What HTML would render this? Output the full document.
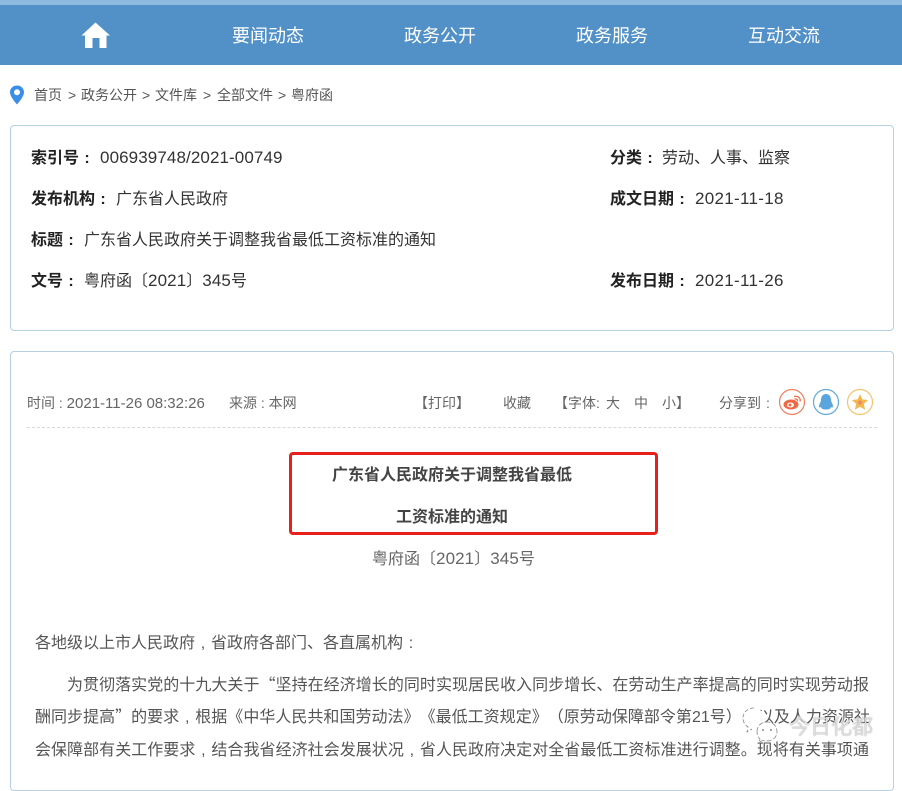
<!DOCTYPE html>
<html lang="zh-CN"><head><meta charset="utf-8"><title>广东省人民政府关于调整我省最低工资标准的通知</title>
<style>
html,body{margin:0;padding:0;background:#fff}
body{width:902px;height:767px;overflow:hidden;position:relative;font-family:"Liberation Sans","Noto Sans CJK SC",sans-serif;color:#444;text-spacing-trim:space-all}
.a{position:absolute;white-space:nowrap}
.nav{color:#fff;font-size:18px;line-height:24px;top:24px}
.cr{font-size:14px;line-height:18px;top:86px;color:#555}
.box{position:absolute;box-sizing:border-box;border:1px solid #b5d0e2;border-radius:4px;background:#fff}
.i{font-size:16px;line-height:22px;color:#333}
.i b{color:#222}
.n{font-size:17px;letter-spacing:.1px;line-height:0}
.d{letter-spacing:.3px}
.m{font-size:14px;line-height:20px;top:393px;color:#666}
.p{font-size:16px;line-height:22px;color:#555}
.j{text-align:justify;text-align-last:justify;white-space:normal}
.c{font-family:"Noto Sans CJK SC",sans-serif;line-height:0}
.q{display:inline-block;width:1em;text-align:center;text-align-last:center;line-height:0}
</style></head><body>
<div class="a" style="left:0;top:0;width:902px;height:5px;background:#8fbae0"></div>
<div class="a" style="left:0;top:5px;width:902px;height:60px;background:#5291c7"></div>
<svg class="a" style="left:81px;top:22px" width="30" height="27" viewBox="0 0 30 27"><path fill="#fff" d="M14.500 0.500 L29 13.500 L25.500 13.500 L25.500 26 L18.500 26 L18.500 16 L11.500 16 L11.500 26 L4 26 L4 13.500 L0.500 13.500 Z"/></svg>
<div class="a nav" style="left:232px">要闻动态</div>
<div class="a nav" style="left:404px">政务公开</div>
<div class="a nav" style="left:576px">政务服务</div>
<div class="a nav" style="left:748px">互动交流</div>

<svg class="a" style="left:9px;top:85px" width="16" height="20" viewBox="0 0 16 20"><path fill="#3a8ee6" fill-rule="evenodd" d="M8 0.500C3.900 0.500 1 3.500 1 7.300C1 11.500 5.500 16.500 8 19.500C10.500 16.500 15 11.500 15 7.300C15 3.500 12.100 0.500 8 0.500ZM8 4.300A3 3 0 1 1 8 10.300A3 3 0 1 1 8 4.300Z"/></svg>
<div class="a cr" style="left:34px">首页</div><div class="a cr" style="left:68px">&gt;</div>
<div class="a cr" style="left:81px">政务公开</div><div class="a cr" style="left:142px">&gt;</div>
<div class="a cr" style="left:155px">文件库</div><div class="a cr" style="left:203px">&gt;</div>
<div class="a cr" style="left:217px">全部文件</div><div class="a cr" style="left:278px">&gt;</div>
<div class="a cr" style="left:291px">粤府函</div>

<div class="box" style="left:10px;top:125px;width:884px;height:206px"></div>
<div class="a i" style="left:31px;top:148px"><b>索引号<span class="q">:</span></b><span class="n" style="margin-left:5px">006939748/2021-00749</span></div>
<div class="a i" style="left:31px;top:189px"><b>发布机构<span class="q">:</span></b><span style="margin-left:5px">广东省人民政府</span></div>
<div class="a i" style="left:31px;top:230px"><b>标题<span class="q">:</span></b><span style="margin-left:5px">广东省人民政府关于调整我省最低工资标准的通知</span></div>
<div class="a i" style="left:31px;top:271px"><b>文号<span class="q">:</span></b><span style="margin-left:5px">粤府函〔<span class="n">2021</span>〕<span class="n">345</span>号</span></div>
<div class="a i" style="left:610px;top:148px"><b>分类<span class="q">:</span></b><span style="margin-left:4px">劳动、人事、监察</span></div>
<div class="a i" style="left:610px;top:189px"><b>成文日期<span class="q">:</span></b><span class="n d" style="margin-left:5px">2021-11-18</span></div>
<div class="a i" style="left:610px;top:271px"><b>发布日期<span class="q">:</span></b><span class="n d" style="margin-left:5px">2021-11-26</span></div>

<div class="box" style="left:10px;top:351px;width:884px;height:440px"></div>
<div class="a m" style="left:27px">时间 : <span style="font-size:15px;line-height:0">2021-11-26 08:32:26</span></div>
<div class="a m" style="left:229px">来源 : 本网</div>
<div class="a m" style="left:414px">【打印】</div>
<div class="a m" style="left:503px">收藏</div>
<div class="a m" style="left:554px">【字体:</div>
<div class="a m" style="left:606px">大</div>
<div class="a m" style="left:634px">中</div>
<div class="a m" style="left:662px">小</div>
<div class="a m" style="left:676px">】</div>
<div class="a m" style="left:719px">分享到<span class="q">:</span></div>

<svg class="a" style="left:778px;top:388px" width="96" height="28" viewBox="0 0 96 28">
<circle cx="14" cy="14" r="12.500" fill="#fff" stroke="#ee7f5e" stroke-width="1.200"/>
<ellipse cx="13" cy="16.500" rx="7.500" ry="5" fill="#ee6a45"/>
<ellipse cx="12.500" cy="17" rx="3.500" ry="2.500" fill="#fff"/>
<circle cx="12" cy="17" r="1.500" fill="#ee6a45"/>
<path d="M16 8.500C20 7.500 23 10 22 13.500M16.500 11C18.500 10.500 19.800 11.500 19.500 13" fill="none" stroke="#ee6a45" stroke-width="1.300"/>
<circle cx="48" cy="14" r="12.500" fill="#fff" stroke="#62a9dc" stroke-width="1.200"/>
<path fill="#5aa6dc" d="M48 6C44.500 6 43 9 43 12C43 14 41 16 41 18.500C41 20 42.500 19.500 43 19C43.500 21 45 21.500 48 21.500C51 21.500 52.500 21 53 19C53.500 19.500 55 20 55 18.500C55 16 53 14 53 12C53 9 51.500 6 48 6Z"/>
<circle cx="82" cy="14" r="12.500" fill="#fff" stroke="#f2c56c" stroke-width="1.200"/>
<path fill="#f3b94f" d="M82 6L84.400 11.400L90.200 12L85.800 15.900L87.100 21.700L82 18.700L76.900 21.700L78.200 15.900L73.800 12L79.600 11.400Z"/>
<circle cx="82" cy="14.500" r="2.200" fill="#ef8f5c"/>
</svg>

<div class="a" style="left:27px;top:427px;width:850px;border-top:1px dashed #d8d8d8"></div>

<div class="a" style="left:289px;top:452px;width:369px;height:83px;box-sizing:border-box;border:3px solid #e8201c;border-radius:4px"></div>
<div class="a" style="left:332px;top:465px;font-size:16px;line-height:22px;font-weight:bold;color:#444">广东省人民政府关于调整我省最低</div>
<div class="a" style="left:396px;top:507px;font-size:16px;line-height:22px;font-weight:bold;color:#444">工资标准的通知</div>
<div class="a" style="left:372px;top:549px;font-size:16px;line-height:22px;color:#666">粤府函〔<span class="n">2021</span>〕<span class="n">345</span>号</div>

<div class="a p" style="left:35px;top:633px">各地级以上市人民政府<span class="q">,</span>省政府各部门、各直属机构<span class="q">:</span></div>
<div class="a p j" style="left:67px;top:675px;width:802px">为贯彻落实党的十九大关于<span class="c">“</span>坚持在经济增长的同时实现居民收入同步增长、在劳动生产率提高的同时实现劳动报</div>
<div class="a p j" style="left:35px;top:707px;width:835px">酬同步提高<span class="c">”</span>的要求<span class="q">,</span>根据《中华人民共和国劳动法》《最低工资规定》（原劳动保障部令第21号）、以及人力资源社</div>
<div class="a p j" style="left:35px;top:740px;width:834px">会保障部有关工作要求<span class="q">,</span>结合我省经济社会发展状况<span class="q">,</span>省人民政府决定对全省最低工资标准进行调整。现将有关事项通</div>

<svg class="a" style="left:740px;top:704px" width="42" height="42" viewBox="0 0 42 42">
<path d="M14 4C8 4 3 8 3 14C3 18 5 21 8 23L7 28L12 25L18 27L26 16L24 8Z" fill="#fff" fill-opacity=".95"/>
<circle cx="27" cy="28" r="10" fill="#fff" fill-opacity=".9"/>
<path d="M14 4C8 4 3 8 3 14C3 18 5 21 8 23L7 28L12 25" fill="none" stroke="#888" stroke-width=".8" stroke-dasharray="4 2"/>
<path d="M17 28C17 22 21 18 27 18C33 18 37 22 37 28C37 33 33 37 27 37C25 37 24 37 23 36.500L19 38L20 35C18 33 17 31 17 28Z" fill="none" stroke="#888" stroke-width=".8" stroke-dasharray="5 2"/>
<circle cx="23" cy="26" r=".9" fill="#666"/><circle cx="31" cy="26" r=".9" fill="#666"/>
</svg>
<div class="a" style="left:789px;top:714px;font-size:21px;line-height:28px;color:rgba(255,255,255,.7);text-shadow:0 0 1px rgba(90,90,90,.8)">今日化都</div>
</body></html>
